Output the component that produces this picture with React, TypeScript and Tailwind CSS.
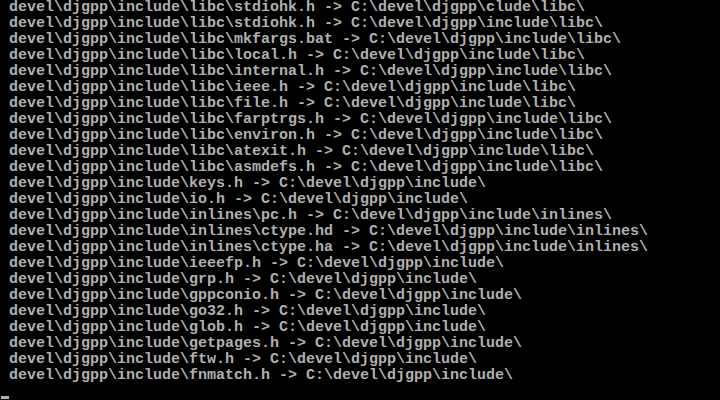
const lines = [
  "devel\\djgpp\\include\\libc\\stdiohk.h -> C:\\devel\\djgpp\\clude\\libc\\",
  "devel\\djgpp\\include\\libc\\stdiohk.h -> C:\\devel\\djgpp\\include\\libc\\",
  "devel\\djgpp\\include\\libc\\mkfargs.bat -> C:\\devel\\djgpp\\include\\libc\\",
  "devel\\djgpp\\include\\libc\\local.h -> C:\\devel\\djgpp\\include\\libc\\",
  "devel\\djgpp\\include\\libc\\internal.h -> C:\\devel\\djgpp\\include\\libc\\",
  "devel\\djgpp\\include\\libc\\ieee.h -> C:\\devel\\djgpp\\include\\libc\\",
  "devel\\djgpp\\include\\libc\\file.h -> C:\\devel\\djgpp\\include\\libc\\",
  "devel\\djgpp\\include\\libc\\farptrgs.h -> C:\\devel\\djgpp\\include\\libc\\",
  "devel\\djgpp\\include\\libc\\environ.h -> C:\\devel\\djgpp\\include\\libc\\",
  "devel\\djgpp\\include\\libc\\atexit.h -> C:\\devel\\djgpp\\include\\libc\\",
  "devel\\djgpp\\include\\libc\\asmdefs.h -> C:\\devel\\djgpp\\include\\libc\\",
  "devel\\djgpp\\include\\keys.h -> C:\\devel\\djgpp\\include\\",
  "devel\\djgpp\\include\\io.h -> C:\\devel\\djgpp\\include\\",
  "devel\\djgpp\\include\\inlines\\pc.h -> C:\\devel\\djgpp\\include\\inlines\\",
  "devel\\djgpp\\include\\inlines\\ctype.hd -> C:\\devel\\djgpp\\include\\inlines\\",
  "devel\\djgpp\\include\\inlines\\ctype.ha -> C:\\devel\\djgpp\\include\\inlines\\",
  "devel\\djgpp\\include\\ieeefp.h -> C:\\devel\\djgpp\\include\\",
  "devel\\djgpp\\include\\grp.h -> C:\\devel\\djgpp\\include\\",
  "devel\\djgpp\\include\\gppconio.h -> C:\\devel\\djgpp\\include\\",
  "devel\\djgpp\\include\\go32.h -> C:\\devel\\djgpp\\include\\",
  "devel\\djgpp\\include\\glob.h -> C:\\devel\\djgpp\\include\\",
  "devel\\djgpp\\include\\getpages.h -> C:\\devel\\djgpp\\include\\",
  "devel\\djgpp\\include\\ftw.h -> C:\\devel\\djgpp\\include\\",
  "devel\\djgpp\\include\\fnmatch.h -> C:\\devel\\djgpp\\include\\",
];

export default function App() {
  return (
    <div
      className="w-[720px] h-[400px] bg-black text-[#b0b0b0] font-bold overflow-hidden flex flex-col text-[15px] leading-4"
      style={{ fontFamily: '"Liberation Mono", "DejaVu Sans Mono", monospace' }}
    >
      {lines.map((line, i) => (
        <div key={i} className="h-4 whitespace-pre pl-[9px]">
          {line}
        </div>
      ))}
      <div className="h-4 flex items-end">
        <div className="w-[8px] h-[3px] bg-[#b0b0b0] ml-px mb-px" />
      </div>
    </div>
  );
}
